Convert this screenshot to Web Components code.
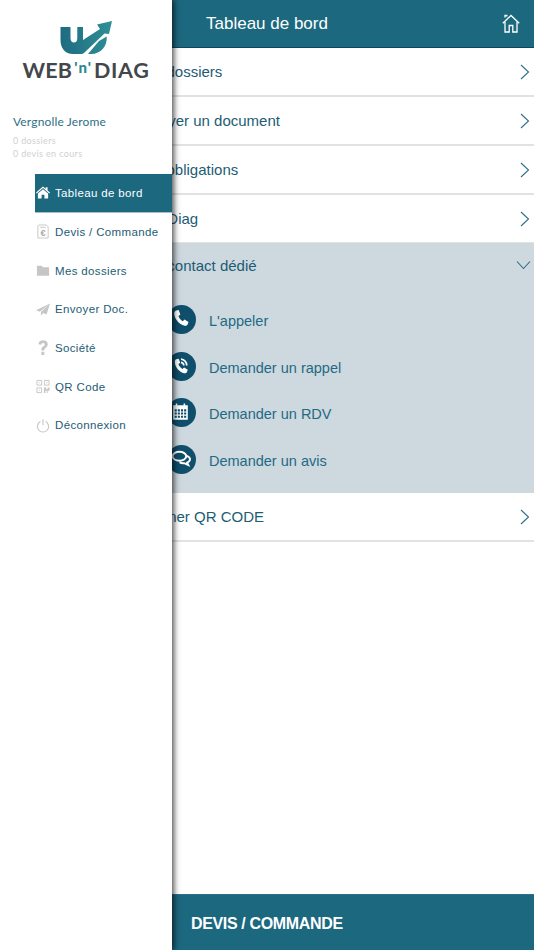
<!DOCTYPE html>
<html lang="fr">
<head>
<meta charset="utf-8">
<title>Tableau de bord</title>
<style>
    html, body {
        margin: 0;
        height: 100%;
        overflow: hidden;
        background-color: #fff;
        font-family: "Liberation Sans", Arial, sans-serif;
    }
</style>
</head>
<body>
<app-shell>
    <side-drawer slot="drawer">
        <drawer-item icon="home" active>Tableau de bord</drawer-item>
        <drawer-item icon="devis">Devis / Commande</drawer-item>
        <drawer-item icon="folder">Mes dossiers</drawer-item>
        <drawer-item icon="send">Envoyer Doc.</drawer-item>
        <drawer-item icon="help">Société</drawer-item>
        <drawer-item icon="qr">QR Code</drawer-item>
        <drawer-item icon="power">Déconnexion</drawer-item>
    </side-drawer>
    <top-bar slot="header">Tableau de bord</top-bar>
    <list-row>Mes dossiers</list-row>
    <list-row>Envoyer un document</list-row>
    <list-row>Mes obligations</list-row>
    <list-row>Mon Diag</list-row>
    <contact-panel title-text="Mon contact dédié">
        <contact-item icon="phone">L'appeler</contact-item>
        <contact-item icon="callback">Demander un rappel</contact-item>
        <contact-item icon="calendar">Demander un RDV</contact-item>
        <contact-item icon="chat">Demander un avis</contact-item>
    </contact-panel>
    <list-row>Scanner QR CODE</list-row>
    <bottom-bar slot="footer">DEVIS / COMMANDE</bottom-bar>
</app-shell>

<script>
const ICONS = {
    home: '<path d="M7.5 1 0 7.6l.8.9L7.5 2.7l6.7 5.8.8-.9-2.6-2.3V2h-2v1.5z"/><path d="M2 8.6 7.5 4 13 8.6V14H9V10H6v4H2z"/>',
    devis: '<path d="M3 .5h8l2 2V14.500H2V1.500z" fill="none" stroke="currentColor"/><path d="M4.500 2.500h6v1h-6z"/><text x="7.700" y="12.500" font-size="10" font-weight="bold" font-family="Liberation Sans" fill="#a8a8a8" text-anchor="middle">€</text>',
    folder: '<path d="M1 2.500h5l1.500 1.500H14V13H1z"/>',
    send: '<path d="M15 1 0 8.200l4.200 1.600zM15 1 5.300 10.300v4l2.300-3 3.700 1.500z"/>',
    help: '<path transform="translate(-2 -1.200) scale(1.250)" d="M3.700 4.200C3.900 1.900 5.500.8 7.700.8c2.300 0 4 1.300 4 3.400 0 1.500-.8 2.300-1.900 3.100-.9.700-1.100 1.100-1.100 2.200H6.200c0-1.700.3-2.500 1.400-3.300.9-.7 1.400-1.100 1.400-1.900 0-.8-.5-1.300-1.400-1.300-.9 0-1.400.6-1.500 1.500zM6.200 10.700h2.500v2.900H6.200z"/>',
    qr: '<g fill="none" stroke="currentColor"><path d="M1 1h5v5H1zM9 1h5v5H9zM1 9h5v5H1z"/></g><path d="M3 3h1v1H3zM11 3h1v1h-1zM3 11h1v1H3zM8.500 8.500H11v2h1.500v-2h2V12h-2v2.500h-1V12H10v2.500H8.500z"/>',
    power: '<path d="M4.700 3.200a6 6 0 1 0 5.600 0" fill="none" stroke="currentColor" stroke-width="1.200"/><path d="M6.900.8h1.200v6.500H6.900z"/>',
    phone: '<path d="M4.800 1.500 7.300 1l1.600 4.200-1.800 1.400c.4 1.900 2.300 4.100 4.100 5l1.700-1.500 3.800 2.300-.9 2.300c-.5 1-1.700 1.500-2.800 1.200C7.600 14.600 3.200 9.400 3 4.300c0-1.200.7-2.300 1.800-2.800z"/>',
    callback: '<path d="M4.800 3 7.300 2.500l1.500 3.900-1.700 1.300c.4 1.800 2.100 3.900 3.800 4.700l1.600-1.400 3.500 2.200-.8 2.100c-.5 1-1.600 1.400-2.600 1.100C7.900 15.500 3.800 10.600 3.600 5.700c0-1.200.3-2.200 1.200-2.700z"/><path d="M9.500 3a6 6 0 0 1 5.500 6" fill="none" stroke="currentColor" stroke-width="1.600"/><path d="M9.500 6a3 3 0 0 1 2.700 3" fill="none" stroke="currentColor" stroke-width="1.600"/>',
    calendar: '<path d="M2 3h2.500V1.500h1.500V3h6V1.500h1.500V3H16v14H2z"/><g fill="#0f4f6b"><path d="M3.500 7h2v2h-2zM6.500 7h2v2h-2zM9.500 7h2v2h-2zM12.500 7h2v2h-2zM3.500 10h2v2h-2zM6.500 10h2v2h-2zM9.500 10h2v2h-2zM12.500 10h2v2h-2zM3.500 13h2v2h-2zM6.500 13h2v2h-2zM9.500 13h2v2h-2zM12.500 13h2v2h-2z"/></g>',
    chat: '<g fill="none" stroke="currentColor" stroke-width="1.900"><ellipse cx="8" cy="7" rx="6.500" ry="4.300"/><path d="M15 6.500c2.300.9 3.400 2.300 3 4-.3 1.200-1.200 2-2.600 2.500l1 2.300-3.800-1.800c-1.700.2-3.300-.2-4.400-1"/></g>'
};

class AppShell extends HTMLElement {
    constructor() {
        super();
        this.shadowDOM = this.attachShadow({mode: 'open'});
        this.shadowDOM.innerHTML = `
            <style>
            :host {
                display: flex;
                flex-direction: column;
                position: relative;
                height: 950px;
                overflow: hidden;
            }
            main {
                flex: 1;
                display: flex;
                flex-direction: column;
            }
            </style>
            <slot name="header"></slot>
            <main><slot></slot></main>
            <slot name="footer"></slot>
            <slot name="drawer"></slot>
        `;
    }
}

class TopBar extends HTMLElement {
    constructor() {
        super();
        this.shadowDOM = this.attachShadow({mode: 'open'});
        this.shadowDOM.innerHTML = `
            <style>
            :host {
                display: flex;
                align-items: center;
                justify-content: space-between;
                box-sizing: border-box;
                height: 48px;
                padding: 0 14px 0 206px;
                background-color: #1c687f;
                border-bottom: 1px solid #0d4660;
                color: #fff;
                font-size: 17px;
            }
            svg {
                width: 18px;
                height: 19px;
                margin-bottom: 1px;
            }
            </style>
            <slot></slot>
            <svg viewBox="0 0 18 19" fill="none" stroke="#fff" stroke-width="1.300">
                <path d="M.8 9.300 9 1.500l8.200 7.800"/>
                <path d="M3 3.500V1.500h1.800v1"/>
                <path d="M3 8v10h4.200v-6.500h3.600V18H15V8"/>
            </svg>
        `;
    }
}

class ListRow extends HTMLElement {
    constructor() {
        super();
        this.shadowDOM = this.attachShadow({mode: 'open'});
        this.shadowDOM.innerHTML = `
            <style>
            :host {
                display: flex;
                align-items: center;
                justify-content: space-between;
                box-sizing: border-box;
                height: 49px;
                padding: 0 4px 0 134px;
                border-bottom: 2px solid #e2e2e2;
                color: #1d5c75;
                font-size: 15px;
            }
            svg {
                width: 10px;
                height: 16px;
            }
            </style>
            <slot></slot>
            <svg viewBox="0 0 10 16" fill="none" stroke="#2d6f88" stroke-width="1.100">
                <path d="M1 1l7.500 7L1 15"/>
            </svg>
        `;
    }
}

class ContactPanel extends HTMLElement {
    constructor() {
        super();
        this.shadowDOM = this.attachShadow({mode: 'open'});
        this.shadowDOM.innerHTML = `
            <style>
            :host {
                display: block;
                box-sizing: border-box;
                height: 250px;
                margin-top: -1px;
                background-color: #cdd8df;
                color: #1d5c75;
                font-size: 15px;
            }
            header {
                display: flex;
                align-items: center;
                justify-content: space-between;
                box-sizing: border-box;
                height: 46px;
                padding: 0 3px 2px 134px;
            }
            svg {
                width: 15px;
                height: 10px;
            }
            .items {
                display: flex;
                flex-direction: column;
                padding: 7.500px 0 0 167px;
            }
            </style>
            <header>
                <span id="title"></span>
                <svg viewBox="0 0 15 10" fill="none" stroke="#2d6f88" stroke-width="1.100">
                    <path d="M1 1.500l6.500 7 6.500-7"/>
                </svg>
            </header>
            <div class="items"><slot></slot></div>
        `;
    }

    connectedCallback() {
        this.shadowDOM.getElementById('title').textContent = this.getAttribute('title-text');
    }
}

class ContactItem extends HTMLElement {
    constructor() {
        super();
        this.shadowDOM = this.attachShadow({mode: 'open'});
    }

    connectedCallback() {
        this.shadowDOM.innerHTML = `
            <style>
            :host {
                display: flex;
                align-items: center;
                gap: 13px;
                height: 46.5px;
                color: #1f6a84;
                font-size: 14.5px;
            }
            .circle {
                display: flex;
                align-items: center;
                justify-content: center;
                width: 29px;
                height: 29px;
                border-radius: 50%;
                background-color: #0f4f6b;
                color: #fff;
            }
            .label {
                padding-top: 3px;
            }
            svg {
                width: 21px;
                height: 21px;
                fill: currentColor;
            }
            </style>
            <span class="circle"><svg viewBox="0 0 20 20">${ICONS[this.getAttribute('icon')]}</svg></span>
            <span class="label"><slot></slot></span>
        `;
    }
}

class BottomBar extends HTMLElement {
    constructor() {
        super();
        this.shadowDOM = this.attachShadow({mode: 'open'});
        this.shadowDOM.innerHTML = `
            <style>
            :host {
                display: flex;
                align-items: center;
                box-sizing: border-box;
                height: 56px;
                padding: 3px 0 0 191px;
                background-color: #1c687f;
                border-top: 1px solid #2f7186;
                color: #fff;
                font-size: 16px;
                font-weight: bold;
                letter-spacing: -.35px;
            }
            </style>
            <slot></slot>
        `;
    }
}

class SideDrawer extends HTMLElement {
    constructor() {
        super();
        this.shadowDOM = this.attachShadow({mode: 'open'});
        this.shadowDOM.innerHTML = `
            <style>
            :host {
                display: flex;
                flex-direction: column;
                position: absolute;
                top: 0;
                bottom: 0;
                left: 0;
                width: 172px;
                background-color: #fff;
                box-shadow: 2px 0 6px rgba(0, 0, 0, .7);
            }
            .logo {
                display: flex;
                flex-direction: column;
                align-items: center;
                padding-top: 20px;
                height: 96px;
                box-sizing: border-box;
            }
            .logo svg {
                display: block;
                width: 56px;
                height: 36px;
                margin-left: 2px;
            }
            .word {
                display: flex;
                align-items: center;
                margin-top: 3px;
                font-family: Lato, "Liberation Sans", sans-serif;
                font-size: 21.5px;
                font-weight: 700;
                line-height: 22px;
                color: #43474b;
                letter-spacing: .2px;
            }
            .word b {
                margin: 0 2px;
                font-size: 15px;
                letter-spacing: 1px;
                color: #2b8794;
                position: relative;
                top: -3px;
            }
            .word span {
                letter-spacing: .7px;
            }
            .user {
                padding: 18px 0 0 13px;
                height: 78px;
                box-sizing: border-box;
                font-family: Lato, "Liberation Sans", sans-serif;
            }
            .name {
                font-size: 12px;
                line-height: 15px;
                color: #2f6f85;
                letter-spacing: .15px;
            }
            .stat {
                font-size: 9px;
                line-height: 13px;
                color: #d0d0d0;
                letter-spacing: .35px;
            }
            .name + .stat {
                margin-top: 5px;
            }
            nav {
                display: flex;
                flex-direction: column;
                padding-left: 35px;
            }
            </style>
            <div class="logo">
                <svg viewBox="0 0 56 36">
                    <defs>
                        <linearGradient id="lg" gradientUnits="userSpaceOnUse" x1="0" y1="0" x2="54" y2="0">
                            <stop offset="0" stop-color="#1d6a80"/>
                            <stop offset="1" stop-color="#2f9096"/>
                        </linearGradient>
                    </defs>
                    <path fill="url(#lg)" d="M1.500 7H11.500V18C11.500 21 13 22.500 15 22.500 17 22.500 18.300 21 18.300 18V7H24V20L41 9 38 4.500 53 1 50 14 45.500 13.500 25 33 23 34H14C6 34 1.500 28 1.500 20Z"/>
                    <path fill="url(#lg)" d="M29 34 40 21 47.700 16.500C48.500 26 42 34 32 34Z"/>
                </svg>
                <div class="word">WEB<b>'n'</b><span>DIAG</span></div>
            </div>
            <div class="user">
                <div class="name">Vergnolle Jerome</div>
                <div class="stat">0 dossiers</div>
                <div class="stat">0 devis en cours</div>
            </div>
            <nav><slot></slot></nav>
        `;
    }
}

class DrawerItem extends HTMLElement {
    constructor() {
        super();
        this.shadowDOM = this.attachShadow({mode: 'open'});
    }

    connectedCallback() {
        this.shadowDOM.innerHTML = `
            <style>
            :host {
                display: flex;
                align-items: center;
                gap: 5px;
                box-sizing: border-box;
                height: 38.67px;
                padding-left: 1px;
                color: #1d5c75;
                font-size: 11.5px;
                letter-spacing: .35px;
            }
            :host([active]) {
                background-color: #1c687f;
                border-bottom: 1px solid #a9bcc5;
                color: #fff;
            }
            svg {
                flex: none;
                width: 14px;
                height: 15px;
                fill: #c6c6c6;
                color: #c6c6c6;
            }
            :host([active]) svg {
                fill: #fff;
                color: #fff;
            }
            </style>
            <svg viewBox="0 0 15 15">${ICONS[this.getAttribute('icon')]}</svg>
            <slot></slot>
        `;
    }
}

customElements.define('app-shell', AppShell);
customElements.define('top-bar', TopBar);
customElements.define('list-row', ListRow);
customElements.define('contact-panel', ContactPanel);
customElements.define('contact-item', ContactItem);
customElements.define('bottom-bar', BottomBar);
customElements.define('side-drawer', SideDrawer);
customElements.define('drawer-item', DrawerItem);
</script>
</body>
</html>
